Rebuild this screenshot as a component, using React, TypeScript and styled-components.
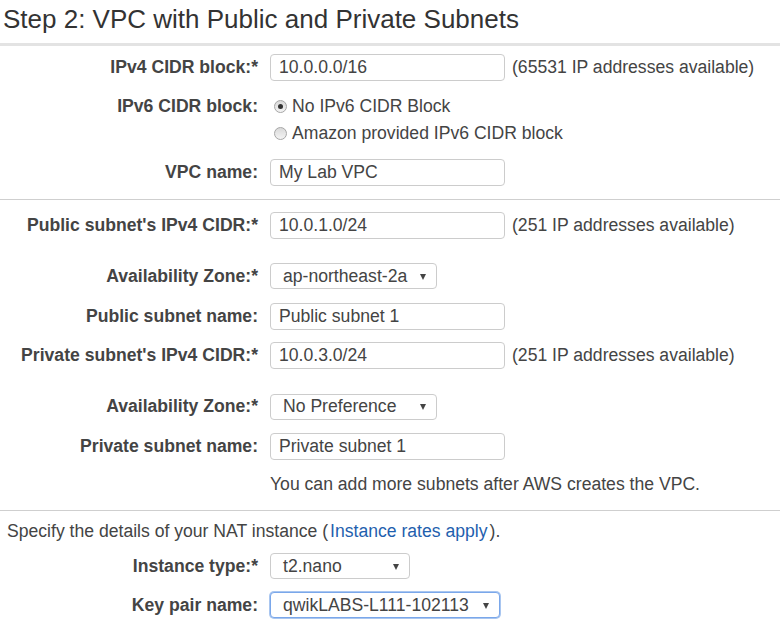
import React from "react";
import styled, { createGlobalStyle } from "styled-components";

const Global = createGlobalStyle`
  html, body { margin: 0; padding: 0; background: #fff; }
  body { font-family: "Liberation Sans", Arial, sans-serif; color: #444; }
  * { box-sizing: border-box; }
`;

const FS = 17.6;

const Page = styled.div`
  width: 780px;
  height: 628px;
  overflow: hidden;
  background: #fff;
`;

const Title = styled.h2`
  margin: 0;
  height: 46px;
  padding: 4px 0 0 3px;
  font-size: 26px;
  font-weight: normal;
  color: #333;
  line-height: 30px;
  border-bottom: 3px solid #e3e3e3;
  white-space: nowrap;
`;

const Section = styled.div<{ $border?: boolean; $pb?: number }>`
  border-bottom: ${(p) => (p.$border ? "1px solid #cfcfcf" : "none")};
  padding-bottom: ${(p) => p.$pb ?? 0}px;
`;

const Row = styled.div<{ $h: number }>`
  display: flex;
  align-items: center;
  height: ${(p) => p.$h}px;
  gap: 12px;
`;

const Label = styled.label`
  flex: 0 0 258px;
  text-align: right;
  font-weight: bold;
  font-size: ${FS}px;
  color: #444;
  white-space: nowrap;
`;

const Input = styled.div<{ $w?: number }>`
  width: ${(p) => p.$w ?? 235}px;
  height: 27px;
  border: 1px solid #cccccc;
  border-radius: 4px;
  padding: 0 8px;
  display: flex;
  align-items: center;
  font-size: ${FS}px;
  color: #444;
  background: #fff;
  white-space: nowrap;
`;

const Select = styled.div<{ $w: number; $focus?: boolean; $h?: number }>`
  width: ${(p) => p.$w}px;
  height: ${(p) => p.$h ?? 26}px;
  border: 1px solid ${(p) => (p.$focus ? "#7aa7ea" : "#cccccc")};
  box-shadow: ${(p) => (p.$focus ? "0 0 0 1px #a9c6f0" : "none")};
  border-radius: 4px;
  padding: 0 10px 0 12px;
  display: flex;
  align-items: center;
  justify-content: space-between;
  font-size: ${FS}px;
  color: #444;
  background: #fff;
  white-space: nowrap;
`;

const Arrow = styled.span`
  width: 0;
  height: 0;
  border-left: 3.5px solid transparent;
  border-right: 3.5px solid transparent;
  border-top: 6px solid #444;
  margin-top: 1px;
`;

const Hint = styled.span`
  font-size: ${FS}px;
  color: #444;
  margin-left: -5px;
  white-space: nowrap;
`;

const RadioRow = styled.div`
  display: flex;
  align-items: flex-start;
  gap: 12px;
  padding-top: 5px;
`;

const RadioLabel = styled(Label)`
  line-height: 27px;
`;

const RadioList = styled.div`
  display: flex;
  flex-direction: column;
`;

const RadioLine = styled.div`
  height: 27px;
  display: flex;
  align-items: center;
  gap: 5px;
  padding-left: 4px;
  font-size: ${FS}px;
  color: #444;
  white-space: nowrap;
`;

const RadioDot = styled.span<{ $on?: boolean }>`
  width: 13px;
  height: 13px;
  border-radius: 50%;
  border: 1px solid #a6a6a6;
  background: linear-gradient(#d9d9d9, #f4f4f4);
  display: inline-flex;
  align-items: center;
  justify-content: center;
  &::after {
    content: "";
    width: 5px;
    height: 5px;
    border-radius: 50%;
    background: ${(p) => (p.$on ? "#333" : "transparent")};
  }
`;

const Note = styled.div`
  padding-left: 270px;
  font-size: ${FS}px;
  color: #444;
  white-space: nowrap;
`;

const Intro = styled.div`
  padding-left: 7px;
  font-size: ${FS}px;
  color: #444;
  white-space: nowrap;
`;

const Link = styled.a`
  color: #1f5fae;
  text-decoration: none;
  margin: 0 2px;
`;

export default function App() {
  return (
    <Page>
      <Global />
      <Title>Step 2: VPC with Public and Private Subnets</Title>
      <Section $border $pb={2}>
        <Row $h={42}>
          <Label>IPv4 CIDR block:*</Label>
          <Input>10.0.0.0/16</Input>
          <Hint>(65531 IP addresses available)</Hint>
        </Row>
        <RadioRow>
          <RadioLabel>IPv6 CIDR block:</RadioLabel>
          <RadioList>
            <RadioLine>
              <RadioDot $on />
              No IPv6 CIDR Block
            </RadioLine>
            <RadioLine>
              <RadioDot />
              Amazon provided IPv6 CIDR block
            </RadioLine>
          </RadioList>
        </RadioRow>
        <Row $h={50}>
          <Label>VPC name:</Label>
          <Input>My Lab VPC</Input>
        </Row>
      </Section>
      <Section $border>
        <Row $h={50}>
          <Label>Public subnet's IPv4 CIDR:*</Label>
          <Input>10.0.1.0/24</Input>
          <Hint>(251 IP addresses available)</Hint>
        </Row>
        <Row $h={52}>
          <Label>Availability Zone:*</Label>
          <Select $w={167}>
            ap-northeast-2a
            <Arrow />
          </Select>
        </Row>
        <Row $h={28}>
          <Label>Public subnet name:</Label>
          <Input>Public subnet 1</Input>
        </Row>
        <Row $h={50}>
          <Label>Private subnet's IPv4 CIDR:*</Label>
          <Input>10.0.3.0/24</Input>
          <Hint>(251 IP addresses available)</Hint>
        </Row>
        <Row $h={53}>
          <Label>Availability Zone:*</Label>
          <Select $w={167}>
            No Preference
            <Arrow />
          </Select>
        </Row>
        <Row $h={26}>
          <Label>Private subnet name:</Label>
          <Input>Private subnet 1</Input>
        </Row>
        <Row $h={51}>
          <Note>You can add more subnets after AWS creates the VPC.</Note>
        </Row>
      </Section>
      <Section>
        <Row $h={40}>
          <Intro>
            Specify the details of your NAT instance (<Link href="#">Instance rates apply</Link>).
          </Intro>
        </Row>
        <Row $h={30}>
          <Label>Instance type:*</Label>
          <Select $w={140} $h={26}>
            t2.nano
            <Arrow />
          </Select>
        </Row>
        <Row $h={48}>
          <Label>Key pair name:</Label>
          <Select $w={230} $focus $h={26}>
            qwikLABS-L111-102113
            <Arrow />
          </Select>
        </Row>
      </Section>
    </Page>
  );
}
